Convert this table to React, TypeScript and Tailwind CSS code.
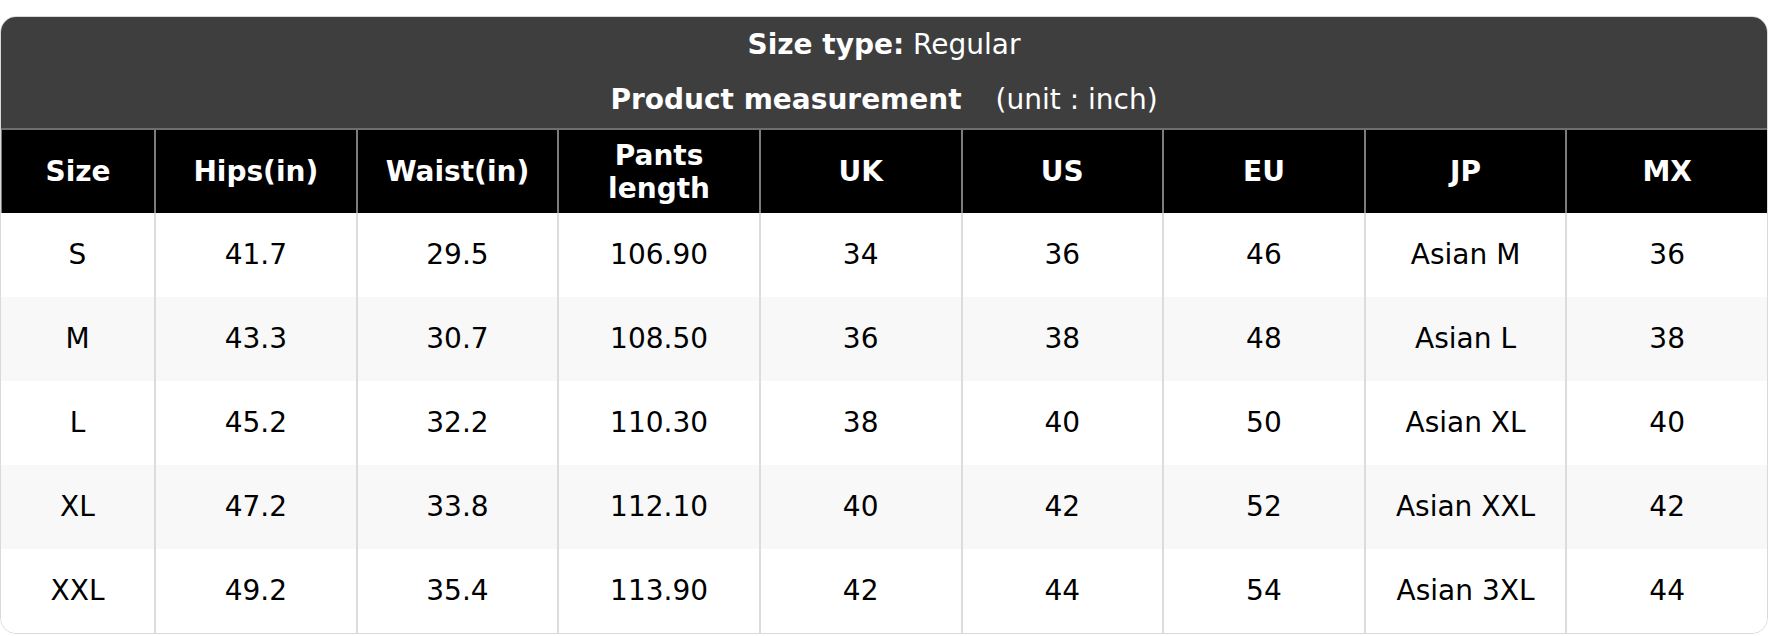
import React from "react";

const headers = ["Size", "Hips(in)", "Waist(in)", "Pants\nlength", "UK", "US", "EU", "JP", "MX"];
const rows = [
  ["S", "41.7", "29.5", "106.90", "34", "36", "46", "Asian M", "36"],
  ["M", "43.3", "30.7", "108.50", "36", "38", "48", "Asian L", "38"],
  ["L", "45.2", "32.2", "110.30", "38", "40", "50", "Asian XL", "40"],
  ["XL", "47.2", "33.8", "112.10", "40", "42", "52", "Asian XXL", "42"],
  ["XXL", "49.2", "35.4", "113.90", "42", "44", "54", "Asian 3XL", "44"],
];

export default function App() {
  return (
    <div className="pt-4 bg-white font-['DejaVu_Sans',sans-serif] text-[28px]">
      <div className="w-[1768px] rounded-2xl overflow-hidden bg-white border border-[#d9d9d9]">
        <div className="bg-[#3e3e3e] text-white -mt-px">
          <div className="h-14 pt-px flex items-center justify-center">
            <span className="font-bold">Size type:</span>
            <span>&nbsp;Regular</span>
          </div>
          <div className="h-14 flex items-center justify-center">
            <span className="font-bold">Product measurement</span>
            <span className="ml-[34px]">(unit : inch)</span>
          </div>
        </div>
        <div className="grid grid-cols-[153px_repeat(8,1fr)] bg-black border-t-2 border-[#6e6e6e] h-[85px]">
          {headers.map((h, i) => (
            <div
              key={i}
              className={`flex items-center justify-center text-center text-white font-bold leading-[33px] whitespace-pre-line ${
                i > 0 ? "border-l-2 border-[#7c7c7c]" : "border-l border-[#7c7c7c]"
              }`}
            >
              {h}
            </div>
          ))}
        </div>
        {rows.map((r, ri) => (
          <div
            key={ri}
            className={`grid grid-cols-[153px_repeat(8,1fr)] h-[84px] ${ri % 2 === 1 ? "bg-[#f8f8f8]" : "bg-white"}`}
          >
            {r.map((c, ci) => (
              <div
                key={ci}
                className={`flex items-center justify-center text-black ${
                  ci > 0 ? "border-l-2 border-[#dcdcdc]" : ""
                }`}
              >
                {c}
              </div>
            ))}
          </div>
        ))}
      </div>
    </div>
  );
}
